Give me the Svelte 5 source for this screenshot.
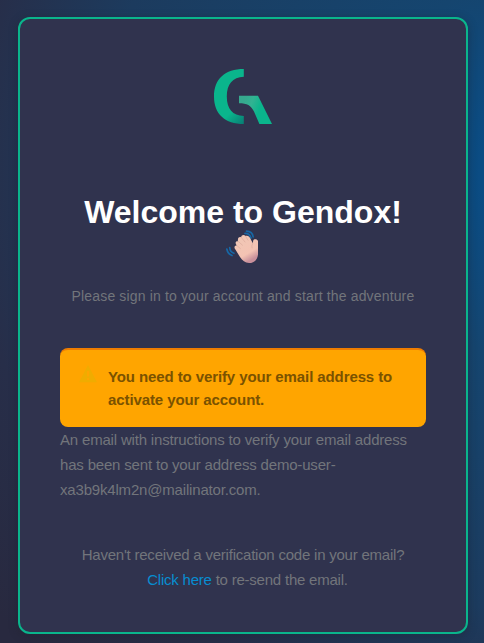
<script>
  const address = 'demo-user-xa3b9k4lm2n@mailinator.com';
</script>

<main>
  <section class="card">
    <svg class="logo" width="58" height="56" viewBox="0 0 58 56" aria-label="Gendox">
      <defs>
        <linearGradient id="arc" x1="8" y1="32" x2="30" y2="55" gradientUnits="userSpaceOnUse">
          <stop offset=".45" stop-color="#0ab58c" /><stop offset="1" stop-color="#087b73" />
        </linearGradient>
        <linearGradient id="tail" x1="28" y1="38" x2="44" y2="44" gradientUnits="userSpaceOnUse">
          <stop stop-color="#36a98e" /><stop offset=".45" stop-color="#31b392" /><stop offset="1" stop-color="#0ab58c" />
        </linearGradient>
      </defs>
      <path fill="url(#arc)" d="M29.8 0C11 0 0 10 0 27.5S11 55 29.8 55V47C18.5 46.5 12.8 40 12.8 27.5S18.5 8.2 29.8 7.7Z" />
      <path fill="url(#tail)" d="M25 26.7H44L58 55H45.4L40 42.5C37 36.5 33 34.3 25 34.3Z" />
    </svg>

    <h1>Welcome to Gendox!</h1>
    <svg class="wave" width="36" height="34" viewBox="0 0 36 34" aria-label="Waving hand">
      <defs>
        <linearGradient id="skin" x1="0" y1="0" x2=".5" y2="1">
          <stop stop-color="#efc8b6" /><stop offset=".75" stop-color="#f4c3b3" /><stop offset="1" stop-color="#c9909b" />
        </linearGradient>
      </defs>
      <g fill="none" stroke="#1767a5" stroke-width="1.7" stroke-linecap="round">
        <path d="M20 3.4Q24.5 3.2 26 8M21.5 1.2Q27.5 1.4 28.2 7M4.7 17.5Q5 22 8.9 23.3M1.8 19Q2.8 24 7 25.5" />
      </g>
      <path fill="url(#skin)" d="M10.4 19.5C8.5 17.5 9.8 15 12 15.7C9.7 13 10.4 10.8 13 11.2C12.6 8.4 13.5 6.6 16.1 7.2C16.5 5 19 4.3 20.5 6C22.7 5 24.2 6.3 25.2 8.3L27.8 13.2L28.2 10.7C28.6 8.8 32.2 8.9 33 11V24.5C32.6 29.8 29 33 24 33C20 32.8 17.5 30.5 15 27Z" />
      <path fill="none" stroke="#d8a698" stroke-width=".6" stroke-linecap="round" d="M12 15.7L15.4 18.6M13 11.2L17.5 15.2M16.1 7.2L20 12M20.5 6L23 10.2M27.8 13.2Q26.1 16 27 18" />
    </svg>
    <p class="subtitle">Please sign in to your account and start the adventure</p>

    <div class="alert">
      <svg class="warning" width="20" height="18" viewBox="0 0 20 18">
        <path fill="#f0ac00" fill-rule="evenodd" d="M10 0L19 17.3H1ZM9 6V11.5H11V6ZM9 13V15H11V13Z" />
      </svg>
      <p>You need to verify your email address to activate your account.</p>
    </div>
    <p class="instructions">An email with instructions to verify your email address has been sent to your address {address}.</p>
    <p class="resend">Haven't received a verification code in your email?<br /><a href="#resend">Click here</a> to re-send the email.</p>
  </section>
</main>

<style>
  main {
    box-sizing: border-box;
    height: 643px;
    padding: 17px 16px 9px 18px;
    overflow: hidden;
    font-family: "Liberation Sans", Arial, sans-serif;
    background: radial-gradient(circle at 540px 170px, #0b4c83 60px, #15456f 190px, #1c3b5e 440px, #272e49 570px, #28293f 700px);
  }
  .card {
    box-sizing: border-box;
    display: flex;
    flex-direction: column;
    align-items: center;
    width: 450px;
    height: 617px;
    padding: 50px 40px 0;
    border: 2px solid #0ab58c;
    border-radius: 12px;
    background: #30334e;
    box-shadow: 0 2px 10px rgba(32, 32, 40, .4);
    color: #72757b;
  }
  h1, p { margin: 0; }
  svg { display: block; flex: none; }
  h1 {
    margin-top: 69px;
    color: #fff;
    font-size: 32px;
    line-height: 36px;
    white-space: nowrap;
  }
  .subtitle {
    margin-top: 20px;
    font-size: 14px;
    letter-spacing: .15px;
    line-height: 25px;
    white-space: nowrap;
  }
  .alert {
    box-sizing: border-box;
    display: flex;
    width: 366px;
    height: 79px;
    margin-top: 39px;
    padding: 15px 20px 0 18px;
    border-top: 2px solid #ef7d00;
    border-radius: 8px;
    background: #ffa500;
    color: #7a5200;
    font-size: 15px;
    font-weight: 700;
    letter-spacing: -.1px;
    line-height: 23px;
  }
  .alert p { margin-left: 10px; }
  .instructions {
    width: 366px;
    font-size: 15px;
    letter-spacing: -.18px;
    line-height: 25px;
  }
  .resend {
    margin-top: 40px;
    font-size: 15px;
    letter-spacing: -.22px;
    line-height: 25px;
    text-align: center;
    white-space: nowrap;
  }
  a { margin-left: 9px; color: #078dd1; text-decoration: none; }
</style>
